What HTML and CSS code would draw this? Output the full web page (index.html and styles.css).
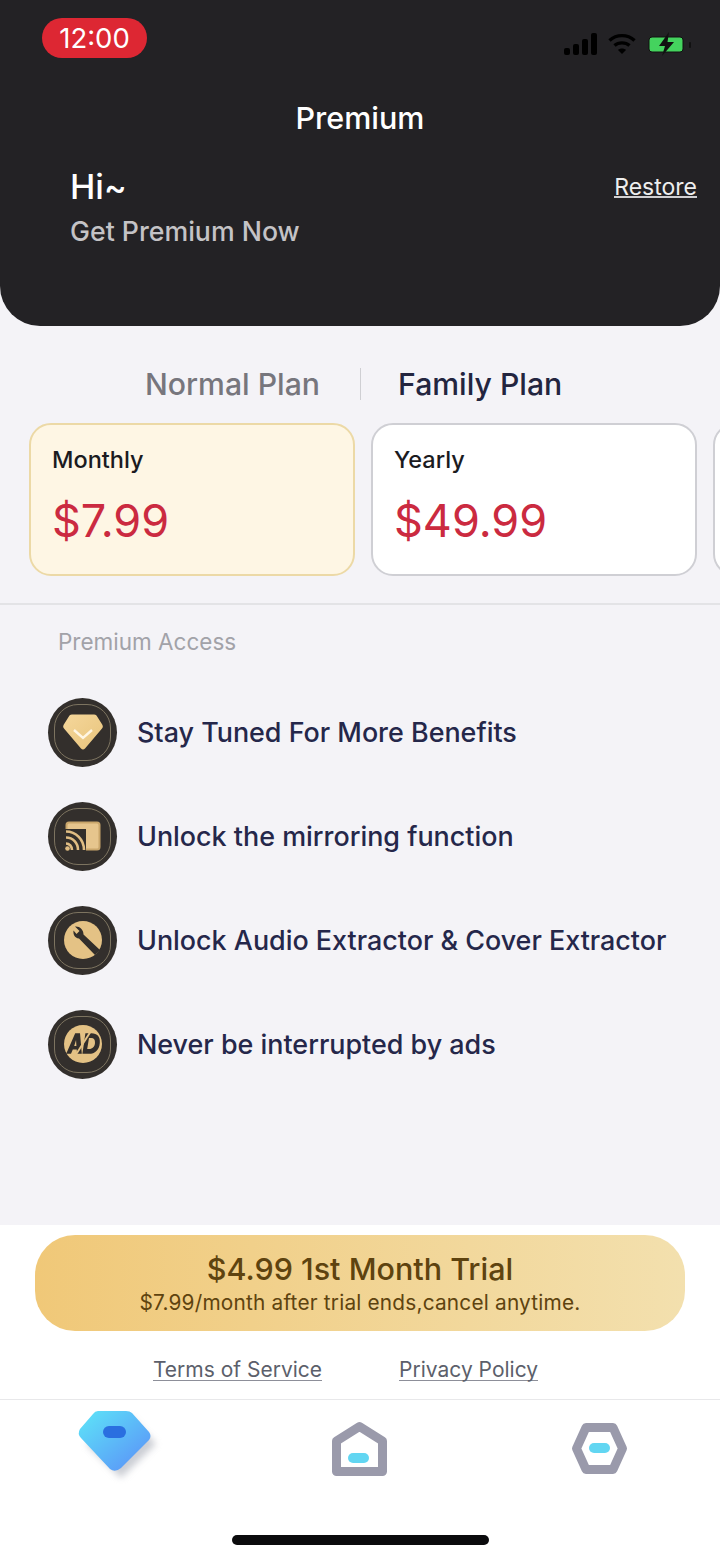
FILE: index.html
```html
<!DOCTYPE html>
<html lang="en">
<head>
    <meta charset="UTF-8">
    <meta name="viewport" content="width=device-width, initial-scale=1.0">
    <title>Premium</title>
    <link rel="stylesheet" href="styles.css">
</head>
<body>
    <!-- Dark Header -->
    <header class="top">
        <div class="status-bar">
            <span class="clock">12:00</span>
            <div class="status-icons">
                <svg width="34" height="22" viewBox="0 0 34 22" fill="#000">
                    <rect x="0" y="15" width="6" height="7" rx="2"/>
                    <rect x="9" y="11" width="6" height="11" rx="2"/>
                    <rect x="18" y="6" width="6" height="16" rx="2"/>
                    <rect x="27" y="0" width="6" height="22" rx="2"/>
                </svg>
                <svg class="wifi" width="28" height="22" viewBox="0 0 28 22" fill="none" stroke="#000" stroke-width="3.4">
                    <path d="M1.5 7.5C8.500 1 19.500 1 26.500 7.500"/>
                    <path d="M6.500 12.500C10.500 9 17.500 9 21.500 12.500"/>
                    <path d="M10 17L14 21L18 17C16 15 12 15 10 17Z" fill="#000" stroke="none"/>
                </svg>
                <svg width="44" height="24" viewBox="0 0 44 24">
                    <rect x="1" y="5" width="34" height="15" rx="3" fill="#44d35e" stroke="#111" stroke-width="1"/>
                    <rect x="41" y="10" width="2" height="6" rx="1" fill="#111"/>
                    <path d="M21 0L11 14H17L14 24L26 10H19.500Z" fill="#111"/>
                </svg>
            </div>
        </div>
        <h1 class="page-title">Premium</h1>
        <div class="greeting">
            <div>
                <div class="hi">Hi~</div>
                <div class="get-now">Get Premium Now</div>
            </div>
            <a class="restore">Restore</a>
        </div>
    </header>

    <main class="content">
        <!-- Plan Tabs -->
        <div class="plan-tabs">
            <span class="plan-tab">Normal Plan</span>
            <span class="tab-sep"></span>
            <span class="plan-tab active">Family Plan</span>
        </div>

        <!-- Price Cards -->
        <div class="cards">
            <div class="card selected">
                <div class="card-name">Monthly</div>
                <div class="card-price">$7.99</div>
            </div>
            <div class="card">
                <div class="card-name">Yearly</div>
                <div class="card-price">$49.99</div>
            </div>
            <div class="card"></div>
        </div>

        <!-- Benefits -->
        <section class="access">
            <h2>Premium Access</h2>
            <ul class="benefits">
                <li>
                    <span class="badge">
                        <svg width="42" height="38" viewBox="0 0 42 38">
                            <defs>
                                <linearGradient id="gem" x1="0" y1="0" x2="1" y2="1">
                                    <stop offset="0" stop-color="#f5d79b"/>
                                    <stop offset="1" stop-color="#e8c47c"/>
                                </linearGradient>
                            </defs>
                            <path d="M10 1.500H32Q33.500 1.500 34.500 2.500L40.500 12Q41.500 14 40 15.500L23 35.500Q21 37.500 19 35.500L2 15.500Q0.500 14 1.500 12L7.500 2.500Q8.500 1.500 10 1.500Z" fill="url(#gem)"/>
                            <path d="M12 17L21 25L30 17" fill="none" stroke="#fff6e4" stroke-width="2.400"/>
                        </svg>
                    </span>
                    Stay Tuned For More Benefits
                </li>
                <li>
                    <span class="badge">
                        <svg width="36" height="30" viewBox="0 0 36 30">
                            <rect x="1.500" y="1.500" width="33" height="27" rx="2.500" fill="#e6c58d" stroke="#c9a66b" stroke-width="2"/>
                            <rect x="0" y="8" width="21" height="22" fill="#332f2b"/>
                            <path d="M1 10.500C11 10.500 19 18.500 19 29M1 16.500C8 16.500 13 22 13 29M1 22.500C4.500 22.500 7 25.500 7 29" fill="none" stroke="#e0bd83" stroke-width="2.600"/>
                            <circle cx="2.500" cy="27.500" r="2.300" fill="#e0bd83"/>
                        </svg>
                    </span>
                    Unlock the mirroring function
                </li>
                <li>
                    <span class="badge">
                        <svg width="38" height="38" viewBox="0 0 38 38">
                            <circle cx="19" cy="19" r="19" fill="#e4c285"/>
                            <path d="M9.500 9.500C9 13 10.500 17 15 17.500L31 34L36 29L19.500 13.500C19.500 8.500 15.500 5 11 5.500L15.500 10L12.500 13Z" fill="#322e2b"/>
                        </svg>
                    </span>
                    Unlock Audio Extractor &amp; Cover Extractor
                </li>
                <li>
                    <span class="badge">
                        <svg width="38" height="38" viewBox="0 0 38 38">
                            <circle cx="19" cy="19" r="19" fill="#e4c285"/>
                            <g transform="translate(19 18.500) scale(1.200) translate(-19 -18.500)">
                                <path d="M5 27L12.500 10H16.500L18 27H14L13.800 23.500H10.500L9 27ZM11.700 20.500H13.500L13.200 15.500Z" fill="#322e2b"/>
                                <path d="M21 10H26C31 10 33.500 13 33 18C32.500 24 29 27 24 27H18.500ZM24 14L22.500 23H24C27 23 28.800 21 29 18C29.200 15.500 28 14 26 14Z" fill="#322e2b"/>
                                <path d="M11 31L27 6" stroke="#e4c285" stroke-width="1.600"/>
                            </g>
                        </svg>
                    </span>
                    Never be interrupted by ads
                </li>
            </ul>
        </section>
    </main>

    <!-- Bottom Area -->
    <footer class="bottom">
        <div class="trial">
            <div class="trial-main">$4.99 1st Month Trial</div>
            <div class="trial-sub">$7.99/month after trial ends,cancel anytime.</div>
        </div>
        <div class="links">
            <a>Terms of Service</a>
            <a>Privacy Policy</a>
        </div>
        <nav class="tabbar">
            <svg width="90" height="76" viewBox="0 0 90 76">
                <defs>
                    <linearGradient id="tabgem" x1="0" y1="0" x2="1" y2="1">
                        <stop offset="0" stop-color="#5de6f8"/>
                        <stop offset="1" stop-color="#5b8cf8"/>
                    </linearGradient>
                    <filter id="blur" x="-30%" y="-30%" width="160%" height="160%">
                        <feGaussianBlur stdDeviation="3.500"/>
                    </filter>
                </defs>
                <path d="M30 10H58L82 36L47 70L13 37Z" fill="#a9adb8" opacity="0.6" filter="url(#blur)"/>
                <path d="M24 3H52Q56 3 58 5L75 24Q78 28 75 32L47 60Q41 65 36 61L7 30Q3 26 6 21L19 6Q21 3 24 3Z" fill="url(#tabgem)"/>
                <rect x="29" y="18" width="23" height="12" rx="6" fill="#2a6fe0"/>
            </svg>
            <svg width="60" height="60" viewBox="0 0 60 60">
                <path d="M29.500 7.500L52.500 22V52.500H6.500V22Z" fill="#fff" stroke="#9a9aab" stroke-width="9" stroke-linejoin="round"/>
                <rect x="18" y="34" width="21" height="10" rx="5" fill="#62d6f2"/>
            </svg>
            <svg width="60" height="60" viewBox="0 0 60 60">
                <path d="M17 8.500H44L53.500 29.500L44 50.500H17L7.500 29.500Z" fill="#fff" stroke="#9a9aab" stroke-width="9" stroke-linejoin="round"/>
                <rect x="20" y="24" width="21" height="10" rx="5" fill="#62d6f2"/>
            </svg>
        </nav>
        <div class="home-indicator"></div>
    </footer>
</body>
</html>
```

FILE: styles.css
```css
/* Base Reset */
body, html {
    margin: 0;
    padding: 0;
    font-family: Inter, "Noto Sans", sans-serif;
    background-color: #f4f3f7;
}
* {
    box-sizing: border-box;
}
body {
    width: 720px;
    height: 1560px;
    display: flex;
    flex-direction: column;
    overflow: hidden;
}

/* Header */
.top {
    height: 326px;
    background-color: #232225;
    border-radius: 0 0 40px 40px;
    color: #fff;
    flex-shrink: 0;
}
.status-bar {
    display: flex;
    justify-content: space-between;
    padding: 18px 28px 0 42px;
    height: 100px;
}
.clock {
    width: 105px;
    height: 40px;
    border-radius: 20px;
    background-color: #dd2733;
    font-size: 27.500px;
    line-height: 40px;
    text-align: center;
}
.status-icons {
    display: flex;
    align-items: center;
    gap: 10px;
    height: 24px;
    margin-top: 14px;
}
.wifi {
    margin-right: 2px;
}
.page-title {
    margin: 0;
    font-size: 30.500px;
    font-weight: 500;
    line-height: 36px;
    text-align: center;
}
.greeting {
    display: flex;
    justify-content: space-between;
    align-items: flex-start;
    padding: 29px 23px 0 70px;
}
.hi {
    font-size: 34px;
    font-weight: 500;
    line-height: 44px;
}
.get-now {
    font-size: 26.700px;
    font-weight: 500;
    line-height: 34px;
    margin-top: 5px;
    color: #c4c3c6;
}
.restore {
    font-size: 23px;
    line-height: 18px;
    margin-top: 13px;
    border-bottom: 2px solid #d0d0d2;
    color: #eee;
}

/* Plan Tabs */
.content {
    flex: 1;
}
.plan-tabs {
    display: flex;
    align-items: center;
    height: 97px;
    padding-top: 19px;
}
.plan-tab {
    font-size: 30.200px;
    font-weight: 500;
    color: #77767d;
    width: 320px;
    text-align: right;
}
.plan-tab.active {
    color: #23253f;
    text-align: left;
    padding-left: 37px;
    width: 359px;
}
.tab-sep {
    width: 1px;
    height: 32px;
    background-color: #cfcfd3;
    margin-left: 40px;
}

/* Price Cards */
.cards {
    display: flex;
    gap: 16px;
    padding-left: 29px;
    padding-bottom: 27px;
    border-bottom: 2px solid #e3e3e6;
    overflow: hidden;
    height: 182px;
}
.card {
    flex: 0 0 326px;
    height: 153px;
    padding: 21px 21px 0;
    background-color: #fff;
    border: 2px solid #cfcfd4;
    border-radius: 22px;
}
.card.selected {
    background-color: #fef6e4;
    border-color: #ecd9a6;
}
.card-name {
    font-size: 23.500px;
    font-weight: 500;
    line-height: 28px;
    color: #1b1b1f;
}
.card-price {
    margin-top: 19px;
    font-size: 45px;
    line-height: 56px;
    color: #cb2a40;
}

/* Benefits */
.access {
    padding: 23px 0 0 48px;
}
.access h2 {
    margin: 0 0 0 10px;
    font-size: 22.500px;
    font-weight: 400;
    line-height: 28px;
    color: #a2a2a8;
}
.benefits {
    list-style: none;
    margin: 24px 0 0;
    padding: 0;
}
.benefits li {
    display: flex;
    align-items: center;
    gap: 20px;
    height: 104px;
    font-size: 26.900px;
    font-weight: 500;
    color: #25274a;
}
.badge {
    position: relative;
    display: flex;
    align-items: center;
    justify-content: center;
    flex-shrink: 0;
    width: 69px;
    height: 69px;
    border-radius: 50%;
    background-color: #332f2c;
}
.badge::before {
    content: "";
    position: absolute;
    inset: 6px;
    border: 1px solid #7d7460;
    border-radius: 24px;
}
.badge svg {
    position: relative;
}

/* Bottom Area */
.bottom {
    flex-shrink: 0;
    height: 335px;
    padding-top: 10px;
    background-color: #fff;
}
.trial {
    width: 650px;
    height: 96px;
    margin: 0 auto;
    padding-top: 15px;
    border-radius: 40px;
    background: linear-gradient(90deg, #f0c878, #f3e0ae);
    text-align: center;
    color: #5e430f;
}
.trial-main {
    font-size: 30.500px;
    font-weight: 500;
    line-height: 38px;
}
.trial-sub {
    font-size: 20.800px;
    line-height: 28px;
    margin-top: 1px;
    letter-spacing: 0.200px;
}
.links {
    display: flex;
    justify-content: center;
    gap: 77px;
    height: 69px;
    padding: 26px 29px 0 0;
    border-bottom: 1px solid #e8e8ea;
}
.links a {
    height: 24px;
    font-size: 21px;
    line-height: 25px;
    color: #5c5f6b;
    border-bottom: 1.500px solid #8d8f99;
}
.tabbar {
    position: relative;
    display: flex;
    justify-content: space-between;
    padding: 19px 91px 0 330px;
}
.tabbar svg:first-child {
    position: absolute;
    left: 74px;
    top: 8px;
}
.home-indicator {
    width: 257px;
    height: 10px;
    margin: 56px auto 0;
    border-radius: 5px;
    background-color: #0b0b0d;
}
```
